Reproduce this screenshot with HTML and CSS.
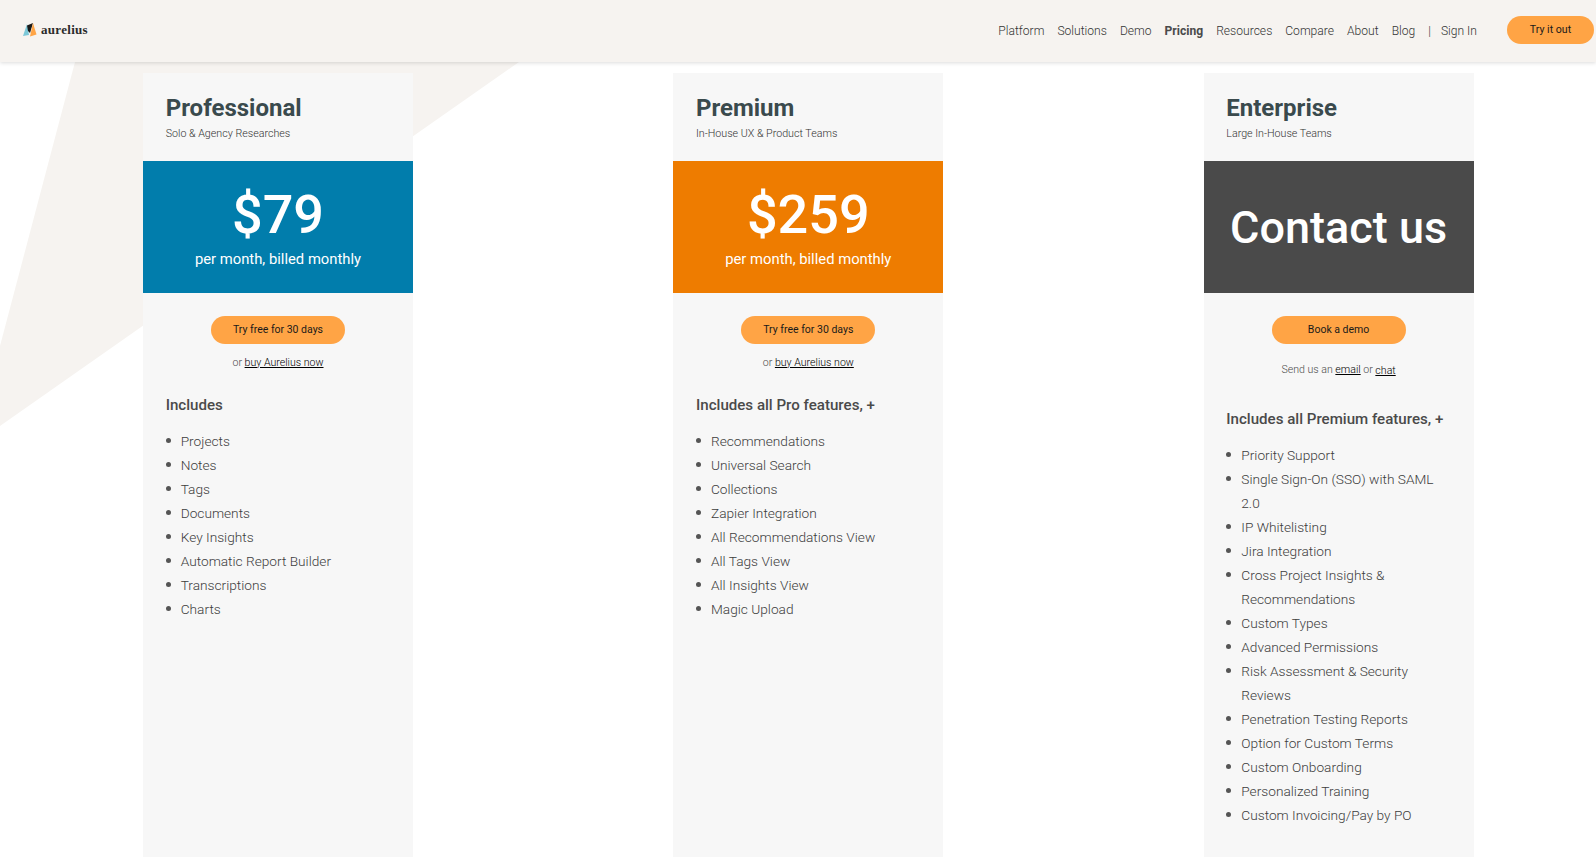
FILE: index.html
```html
<!DOCTYPE html>
<html lang="en">
<head>
  <meta charset="UTF-8" />
  <title>Aurelius Pricing</title>
  <link rel="stylesheet" href="styles.css">
</head>
<body>
  <header class="topbar">
    <a class="logo" href="#">
      <svg width="14" height="15" viewBox="0 0 14 15">
        <polygon points="0,14 4,2 6,13" fill="#7cc8d8"/>
        <polygon points="4,3.5 10,1 7,11 5,9" fill="#1a1a1a"/>
        <polygon points="7,14.5 10,1 13.5,12.5" fill="#ffa445"/>
      </svg>
      <span>aurelius</span>
    </a>
    <nav class="nav">
      <a href="#">Platform</a>
      <a href="#">Solutions</a>
      <a href="#">Demo</a>
      <a href="#" class="active">Pricing</a>
      <a href="#">Resources</a>
      <a href="#">Compare</a>
      <a href="#">About</a>
      <a href="#">Blog</a>
      <span class="sep">|</span>
      <a href="#">Sign In</a>
      <a href="#" class="btn nav-btn">Try it out</a>
    </nav>
  </header>

  <svg class="backdrop" width="520" height="370" viewBox="0 0 520 370">
    <polygon points="75,0 519,0 0,364 0,284" fill="#f6f3f0"/>
  </svg>

  <main class="plans">
    <section class="plan">
      <div class="plan-head">
        <h2>Professional</h2>
        <p>Solo &amp; Agency Researches</p>
      </div>
      <div class="price blue">
        <div class="amount">$79</div>
        <div class="period">per month, billed monthly</div>
      </div>
      <div class="cta">
        <a href="#" class="btn">Try free for 30 days</a>
        <p class="alt">or <a href="#">buy Aurelius now</a></p>
      </div>
      <div class="features">
        <h3>Includes</h3>
        <ul>
          <li>Projects</li>
          <li>Notes</li>
          <li>Tags</li>
          <li>Documents</li>
          <li>Key Insights</li>
          <li>Automatic Report Builder</li>
          <li>Transcriptions</li>
          <li>Charts</li>
        </ul>
      </div>
    </section>

    <section class="plan">
      <div class="plan-head">
        <h2>Premium</h2>
        <p>In-House UX &amp; Product Teams</p>
      </div>
      <div class="price orange">
        <div class="amount">$259</div>
        <div class="period">per month, billed monthly</div>
      </div>
      <div class="cta">
        <a href="#" class="btn">Try free for 30 days</a>
        <p class="alt">or <a href="#">buy Aurelius now</a></p>
      </div>
      <div class="features">
        <h3>Includes all Pro features, +</h3>
        <ul>
          <li>Recommendations</li>
          <li>Universal Search</li>
          <li>Collections</li>
          <li>Zapier Integration</li>
          <li>All Recommendations View</li>
          <li>All Tags View</li>
          <li>All Insights View</li>
          <li>Magic Upload</li>
        </ul>
      </div>
    </section>

    <section class="plan">
      <div class="plan-head">
        <h2>Enterprise</h2>
        <p>Large In-House Teams</p>
      </div>
      <div class="price dark">
        <div class="contact">Contact us</div>
      </div>
      <div class="cta tall">
        <a href="#" class="btn">Book a demo</a>
        <p class="alt">Send us an <a href="#">email</a> or <a href="#" class="chat">chat</a></p>
      </div>
      <div class="features">
        <h3>Includes all Premium features, +</h3>
        <ul>
          <li>Priority Support</li>
          <li>Single Sign-On (SSO) with SAML 2.0</li>
          <li>IP Whitelisting</li>
          <li>Jira Integration</li>
          <li>Cross Project Insights &amp; Recommendations</li>
          <li>Custom Types</li>
          <li>Advanced Permissions</li>
          <li>Risk Assessment &amp; Security Reviews</li>
          <li>Penetration Testing Reports</li>
          <li>Option for Custom Terms</li>
          <li>Custom Onboarding</li>
          <li>Personalized Training</li>
          <li>Custom Invoicing/Pay by PO</li>
        </ul>
      </div>
    </section>
  </main>
</body>
</html>
```

FILE: styles.css
```css
* {
  box-sizing: border-box;
  margin: 0;
  padding: 0;
}

body {
  background: #ffffff;
  font-family: 'Roboto', sans-serif;
  color: #4a4a4a;
  height: 859px;
  overflow: hidden;
  position: relative;
}

a {
  color: inherit;
  text-decoration: none;
}

.topbar {
  height: 62px;
  background: #f6f3f0;
  box-shadow: 0 1px 4px rgba(0, 0, 0, 0.14);
  display: flex;
  align-items: center;
  justify-content: space-between;
  padding: 0 2px 3px 23px;
  position: relative;
  z-index: 2;
}

.logo {
  display: flex;
  align-items: center;
  gap: 4px;
  font-family: 'Liberation Serif', serif;
  font-weight: 700;
  font-size: 13px;
  letter-spacing: 0.3px;
  color: #2b2b2b;
}

.nav {
  display: flex;
  align-items: center;
  font-size: 12.1px;
  font-weight: 300;
  color: #333;
}

.nav a {
  margin-right: 13px;
  padding-top: 2px;
}

.nav .active {
  font-weight: 700;
  color: #4a4a4a;
}

.nav .sep {
  margin-right: 10px;
  padding-top: 2px;
  font-size: 12px;
}

.btn {
  display: block;
  background: #ffa445;
  color: #1a1a1a;
  border-radius: 14px;
  height: 28px;
  line-height: 28px;
  text-align: center;
  font-size: 10.5px;
  font-weight: 400;
}

.nav .nav-btn {
  width: 87px;
  margin: 0 0 0 17px;
  padding-top: 0;
  font-size: 10.6px;
  font-weight: 400;
  color: #1a1a1a;
}

.backdrop {
  position: absolute;
  left: 0;
  top: 62px;
}

.plans {
  position: relative;
  display: grid;
  grid-template-columns: repeat(3, 270px);
  justify-content: space-between;
  padding: 11px 122.4px 0 143px;
}

.plan {
  background: #f7f7f7;
  height: 784px;
}

.plan-head {
  height: 88px;
  padding: 21px 22.7px 0;
}

.plan-head h2 {
  font-size: 24px;
  line-height: 29px;
  font-weight: 700;
  color: #3a4a4d;
}

.plan-head p {
  font-size: 10.7px;
  font-weight: 300;
  line-height: 14px;
  margin-top: 4px;
  color: #333;
}

.price {
  height: 132px;
  color: #fff;
  text-align: center;
  padding-top: 21px;
}

.blue { background: #017dac; }
.orange { background: #ee7c00; }
.dark { background: #4a4a4a; }

.amount {
  font-size: 54px;
  line-height: 66px;
  font-weight: 500;
}

.period {
  font-size: 14.8px;
  line-height: 20px;
  font-weight: 400;
  margin-top: 1px;
}

.contact {
  font-size: 45px;
  font-weight: 500;
  line-height: 92px;
}

.cta {
  padding-top: 23px;
  height: 102px;
  text-align: center;
}

.cta.tall {
  height: 116px;
}

.cta .btn {
  width: 134px;
  margin: 0 auto;
}

.alt {
  font-size: 10.6px;
  font-weight: 300;
  line-height: 14px;
  margin-top: 12px;
}

.tall .alt {
  margin-top: 19px;
}

.alt a {
  color: #000;
  text-decoration: underline;
}

.alt .chat {
  position: relative;
  top: 1px;
}

.features {
  padding: 0 22.7px;
}

.features h3 {
  font-size: 15.1px;
  line-height: 20px;
  font-weight: 500;
  color: #4a4a4a;
}

.features ul {
  margin-top: 14px;
  padding-left: 15px;
  font-size: 13.7px;
  font-weight: 300;
  line-height: 24px;
  color: #3d3d3d;
  list-style: none;
}

.features li {
  position: relative;
}

.features li::before {
  content: "";
  position: absolute;
  left: -15px;
  top: 9px;
  width: 5px;
  height: 5px;
  border-radius: 50%;
  background: #555;
}
```
